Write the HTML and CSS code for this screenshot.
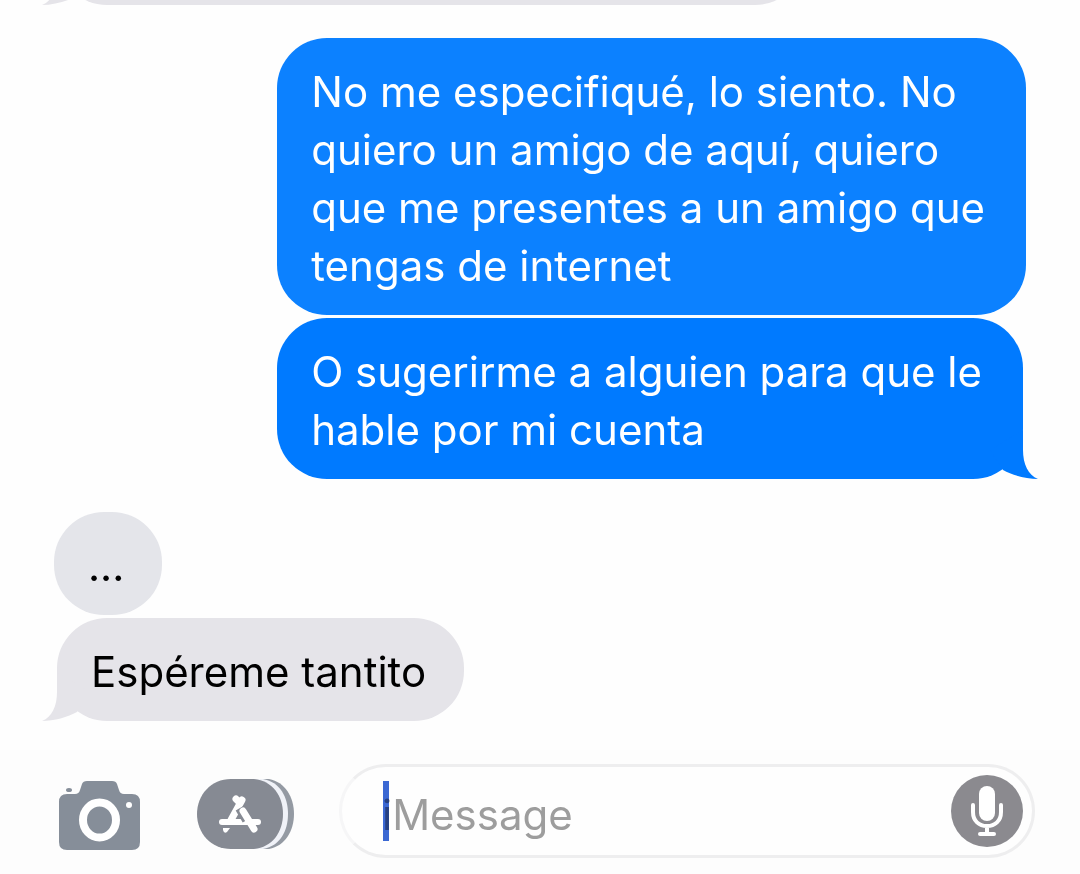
FILE: index.html
```html
<!DOCTYPE html>
<html lang="es">
<head>
<meta charset="utf-8">
<meta name="viewport" content="width=device-width, initial-scale=1">
<title>iMessage</title>
<link rel="stylesheet" href="styles.css">
</head>
<body>
<main class="chat">
  <section class="group received">
    <div class="bubble long last">
      <svg class="tail" viewBox="0 0 48 49" aria-hidden="true"><path d="M15 0V20C15 34 10 45 0 49C12 49 26 45 35 40L48 20Z"/></svg>
    </div>
  </section>
  <section class="group sent">
    <p class="bubble earlier">No me especifiqué, lo siento. No<br>quiero un amigo de aquí, quiero<br>que me presentes a un amigo que<br>tengas de internet</p>
    <p class="bubble last">O sugerirme a alguien para que le<br>hable por mi cuenta
      <svg class="tail" viewBox="0 0 48 49" aria-hidden="true"><path d="M33 0V20C33 34 38 45 48 49C36 49 22 45 13 40L0 20Z"/></svg>
    </p>
  </section>
  <section class="group received">
    <p class="bubble earlier">...</p>
    <p class="bubble last">Espéreme tantito
      <svg class="tail" viewBox="0 0 48 49" aria-hidden="true"><path d="M15 0V20C15 34 10 45 0 49C12 49 26 45 35 40L48 20Z"/></svg>
    </p>
  </section>
</main>
<footer class="composer">
  <div class="tools">
    <button class="tool" type="button" aria-label="Cámara">
      <svg width="81" height="70" viewBox="0 0 81 70" aria-hidden="true">
        <path fill="#868e99" d="M8 15H16Q20 15 21 11L23 5Q24 2 28 2H53Q57 2 58 5L60 11Q61 15 65 15H73Q81 15 81 23V63Q81 71 73 71H8Q0 71 0 63V23Q0 15 8 15Z"/>
        <ellipse cx="10" cy="11" rx="3" ry="2" fill="#868e99"/>
        <ellipse cx="40.500" cy="41" rx="16.500" ry="17.500" fill="none" stroke="#fff" stroke-width="8"/>
        <circle cx="70" cy="26" r="3" fill="#fff"/>
      </svg>
    </button>
    <button class="tool" type="button" aria-label="Aplicaciones">
      <svg width="97" height="70" viewBox="0 0 97 70" aria-hidden="true">
        <path fill="#949aa3" d="M62 0H72C88 3 97 18 97 35S88 67 72 70H62Z"/>
        <path fill="#f0f2f8" d="M55 0H66C83 3 91 18 91 35S83 67 66 70H55Z"/>
        <path fill="#868a93" d="M34 0H54C74 0 86 16 86 35S74 70 54 70H34C14 70 0 54 0 35S14 0 34 0Z"/>
        <g fill="none" stroke="#fff" stroke-linecap="round">
          <path stroke-width="7" d="M45 21L34 41M39 20L42 23"/>
          <path stroke-width="6" d="M25 43H61"/>
          <path stroke="#868a93" stroke-width="10" stroke-linecap="butt" d="M43 29L50 41"/>
          <path stroke-width="7" d="M46 32L57 50"/>
        </g>
        <path fill="#fff" d="M26 49H33L30 53Q27 55 26 51Z"/>
      </svg>
    </button>
  </div>
  <div class="field">
    <input class="entry" type="text" placeholder="iMessage" aria-label="iMessage">
    <span class="caret"></span>
    <button class="mic" type="button" aria-label="Dictar">
      <svg width="72" height="72" viewBox="0 0 72 72" aria-hidden="true">
        <rect x="28" y="11" width="16" height="35" rx="8" fill="#fff"/>
        <path fill="none" stroke="#fff" stroke-width="4" stroke-linecap="round" d="M22 30V37C22 46 28 51 36 51S50 46 50 37V30M36 51V59M29 59H43"/>
      </svg>
    </button>
  </div>
</footer>
</body>
</html>
```
FILE: styles.css
```css
* { box-sizing: border-box; }
body {
  margin: 0;
  height: 100vh;
  display: flex;
  flex-direction: column;
  background: #fefefe;
  font-family: Inter, "Liberation Sans", sans-serif;
}
.chat {
  flex: 1;
  min-height: 0;
  overflow: hidden;
  display: flex;
  flex-direction: column;
  justify-content: flex-end;
  gap: 33px;
  padding: 0 54px 29px;
}
.group {
  flex-shrink: 0;
  display: flex;
  flex-direction: column;
  align-items: flex-start;
  gap: 3px;
}
.sent { align-items: flex-end; }
.bubble {
  position: relative;
  margin: 0;
  padding: 25px 38px 20px 34px;
  min-height: 103px;
  border-radius: 50px;
  background: #e5e4e9;
  color: #000;
  font-size: 42px;
  line-height: 58px;
  white-space: nowrap;
}
.received .earlier { background: #e4e5ea; }
.received .last { margin-left: 3px; }
.long { width: 77%; }
.sent .bubble {
  padding-left: 34px;
  padding-right: 41px;
  background: #007aff;
  color: #fff;
}
.sent .bubble.earlier { background: #0c81ff; }
.sent .last { margin-right: 3px; }
.tail {
  position: absolute;
  bottom: 0;
  width: 48px;
  height: 49px;
  fill: #e5e4e9;
}
.received .tail { left: -15px; }
.sent .tail { right: -15px; fill: #007aff; }
.composer {
  display: flex;
  align-items: center;
  gap: 45px;
  padding: 14px 45px 16px 59px;
  background: #fdfdfd;
}
.tools {
  display: flex;
  gap: 57px;
  padding-top: 6px;
}
.tool, .mic {
  display: block;
  border: 0;
  padding: 0;
  background: none;
}
.tool svg, .mic svg { display: block; overflow: visible; }
.field {
  position: relative;
  flex: 1;
  min-width: 0;
  height: 94px;
  display: flex;
  align-items: center;
  padding: 0 9px 0 40px;
  border: 3px solid #eeeeef;
  border-left-color: #f6f6f7;
  border-radius: 47px;
  background: #fefefe;
}
.entry {
  flex: 1;
  min-width: 0;
  height: 66px;
  border: 0;
  padding: 6px 0 0;
  outline: 0;
  background: none;
  font: 42px/60px Inter, "Liberation Sans", sans-serif;
  color: #000;
}
.entry::placeholder { color: #9d9d9d; opacity: 1; }
.caret {
  position: absolute;
  left: 41px;
  top: 14px;
  width: 6px;
  height: 60px;
  background: #3b68d4;
  mix-blend-mode: multiply;
}
.field .mic {
  border-radius: 50%;
  background: #8b8a8f;
}
```
